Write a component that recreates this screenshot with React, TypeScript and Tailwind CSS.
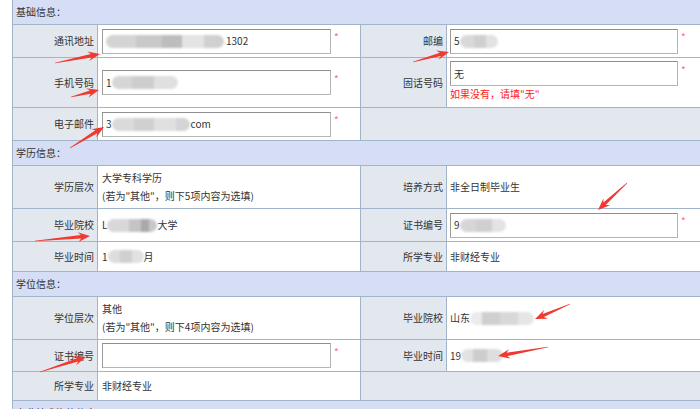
import React from 'react';

// blurred (mosaic) value placeholder: widths + grey shades
const Blur = ({ parts }: { parts: [number, string][] }) => (
    <span className="inline-flex h-[13px] items-stretch rounded-full overflow-hidden blur-[1.2px] align-middle">
        {parts.map(([w, c], i) => (
            <span key={i} style={{ width: w, background: c }} />
        ))}
    </span>
);

const Star = () => <span className="ml-[3px] mb-[8px] text-[10px] leading-none text-[#ff6b6b]">*</span>;

const Box = ({ children, w = 229 }: { children?: React.ReactNode; w?: number }) => (
    <div
        className="h-[25px] flex items-center pl-[3px] bg-white border border-[#b5b5b5] border-t-[#8f8f8f] border-l-[#9a9a9a] text-[#333] whitespace-nowrap"
        style={{ width: w }}
    >
        {children}
    </div>
);

const Label = ({ children, h }: { children?: React.ReactNode; h?: string }) => (
    <div className={`bg-[#e3e8ef] border-r border-b border-[#a2b4ca] flex items-center justify-end pr-[3px] text-[#333] ${h ?? ''}`}>
        {children}
    </div>
);

const Value = ({ children, className = '' }: { children?: React.ReactNode; className?: string }) => (
    <div className={`bg-white border-r border-b border-[#a2b4ca] flex items-center text-[#333] whitespace-nowrap ${className}`}>
        {children}
    </div>
);

const Section = ({ title }: { title: string }) => (
    <div className="col-span-4 h-[25px] bg-[#d6def5] border-b border-[#a2b4ca] flex items-center pl-[3px] text-[#333]">
        {title}
    </div>
);

// red annotation arrow, tapering shaft + notched head
const Arrow = ({ x1, y1, x2, y2 }: { x1: number; y1: number; x2: number; y2: number }) => {
    const dx = x2 - x1, dy = y2 - y1;
    const len = Math.hypot(dx, dy);
    const ux = dx / len, uy = dy / len;
    const nx = -uy, ny = ux;
    const hl = 12;
    const bs = [x2 - ux * hl * 0.75, y2 - uy * hl * 0.75];
    const wb = [x2 - ux * hl, y2 - uy * hl];
    const p = (x: number, y: number) => `${x.toFixed(1)},${y.toFixed(1)}`;
    const pts = [
        p(x1 + nx * 0.3, y1 + ny * 0.3),
        p(bs[0] + nx * 1.7, bs[1] + ny * 1.7),
        p(wb[0] + nx * 4.8, wb[1] + ny * 4.8),
        p(x2, y2),
        p(wb[0] - nx * 4.8, wb[1] - ny * 4.8),
        p(bs[0] - nx * 1.7, bs[1] - ny * 1.7),
        p(x1 - nx * 0.3, y1 - ny * 0.3),
    ].join(' ');
    return <polygon points={pts} fill="#f0392f" />;
};

const arrows = [
    [55, 63, 100, 54],
    [71, 97, 99, 90],
    [70, 148, 104, 127],
    [413, 62, 449, 52],
    [35, 241, 90, 236],
    [627, 183, 598, 210],
    [40, 372, 86, 357],
    [570, 304, 535, 319],
    [548, 347, 498, 356],
];

export default function App() {
    return (
        <div
            className="relative w-[700px] h-[409px] overflow-hidden bg-white text-[10px] leading-[18px]"
            style={{ fontFamily: '"Noto Sans CJK SC", "Noto Sans", sans-serif' }}
        >
            <div className="ml-[12px] w-[710px] border-l border-[#a2b4ca] grid grid-cols-[85px_263px_86px_276px]">
                <Section title="基础信息：" />
                {/* row 1 */}
                <Label h="h-[33px]">通讯地址</Label>
                <Value className="pl-[4px]">
                    <Box>
                        <Blur parts={[[30, '#d4d4d4'], [26, '#c9c9c9'], [20, '#bdbdbd'], [22, '#e4e4e4'], [20, '#d0d0d0']]} />
                        <span className="ml-[2px]">1302</span>
                    </Box>
                    <Star />
                </Value>
                <Label>邮编</Label>
                <Value className="pl-[3px]">
                    <Box w={228}>
                        <span>5</span>
                        <Blur parts={[[14, '#d9d9d9'], [12, '#cfcfcf'], [12, '#e2e2e2']]} />
                    </Box>
                    <Star />
                </Value>
                {/* row 2 */}
                <Label h="h-[50px]">手机号码</Label>
                <Value className="pl-[4px]">
                    <Box>
                        <span>1</span>
                        <Blur parts={[[20, '#d6d6d6'], [22, '#cdcdcd'], [24, '#e0e0e0']]} />
                    </Box>
                    <Star />
                </Value>
                <Label>固话号码</Label>
                <Value className="pl-[3px] flex-col !items-start justify-start pt-[3px]">
                    <div className="flex items-center">
                        <Box w={228}>无</Box>
                        <Star />
                    </div>
                    <div className="text-[#ff2020] mt-[-1px]">如果没有，请填"无"</div>
                </Value>
                {/* row 3 */}
                <Label h="h-[33px]">电子邮件</Label>
                <Value className="pl-[4px]">
                    <Box>
                        <span>3</span>
                        <Blur parts={[[22, '#dadada'], [20, '#d0d0d0'], [22, '#e0e0e0'], [14, '#d4d4d4']]} />
                        <span className="ml-[1px]">com</span>
                    </Box>
                    <Star />
                </Value>
                <div className="col-span-2 bg-[#e3e8ef] border-r border-b border-[#a2b4ca]" />

                <Section title="学历信息：" />
                {/* row 4 */}
                <Label h="h-[43px]">学历层次</Label>
                <Value className="pl-[4px] flex-col !items-start justify-center">
                    <div>大学专科学历</div>
                    <div>(若为"其他"，则下5项内容为选填)</div>
                </Value>
                <Label>培养方式</Label>
                <Value className="pl-[3px]">非全日制毕业生</Value>
                {/* row 5 */}
                <Label h="h-[33px]">毕业院校</Label>
                <Value className="pl-[4px]">
                    <span>L</span>
                    <Blur parts={[[22, '#d8d8d8'], [12, '#c4c4c4'], [8, '#a9a9a9'], [8, '#c8c8c8']]} />
                    <span>大学</span>
                </Value>
                <Label>证书编号</Label>
                <Value className="pl-[3px]">
                    <Box w={228}>
                        <span>9</span>
                        <Blur parts={[[16, '#d6d6d6'], [16, '#cfcfcf'], [14, '#e3e3e3']]} />
                    </Box>
                    <Star />
                </Value>
                {/* row 6 */}
                <Label h="h-[30px]">毕业时间</Label>
                <Value className="pl-[4px]">
                    <span>1</span>
                    <Blur parts={[[12, '#dddddd'], [12, '#d0d0d0'], [12, '#e1e1e1']]} />
                    <span>月</span>
                </Value>
                <Label>所学专业</Label>
                <Value className="pl-[3px]">非财经专业</Value>

                <Section title="学位信息：" />
                {/* row 7 */}
                <Label h="h-[43px]">学位层次</Label>
                <Value className="pl-[4px] flex-col !items-start justify-center">
                    <div>其他</div>
                    <div>(若为"其他"，则下4项内容为选填)</div>
                </Value>
                <Label>毕业院校</Label>
                <Value className="pl-[3px]">
                    <span>山东</span>
                    <Blur parts={[[12, '#ebebeb'], [18, '#cfcfcf'], [18, '#d8d8d8'], [16, '#e6e6e6']]} />
                </Value>
                {/* row 8 */}
                <Label h="h-[32px]">证书编号</Label>
                <Value className="pl-[4px]">
                    <Box />
                    <Star />
                </Value>
                <Label>毕业时间</Label>
                <Value className="pl-[3px]">
                    <span>19</span>
                    <Blur parts={[[12, '#e2e2e2'], [14, '#cdcdcd'], [16, '#dedede']]} />
                </Value>
                {/* row 9 */}
                <Label h="h-[29px]">所学专业</Label>
                <Value className="pl-[4px]">非财经专业</Value>
                <div className="col-span-2 bg-[#e3e8ef] border-r border-b border-[#a2b4ca]" />

                <Section title="专业技术资格信息：" />
            </div>

            <svg className="absolute inset-0 pointer-events-none" width="700" height="409">
                {arrows.map(([a, b, c, d], i) => (
                    <Arrow key={i} x1={a} y1={b} x2={c} y2={d} />
                ))}
            </svg>
        </div>
    );
}
